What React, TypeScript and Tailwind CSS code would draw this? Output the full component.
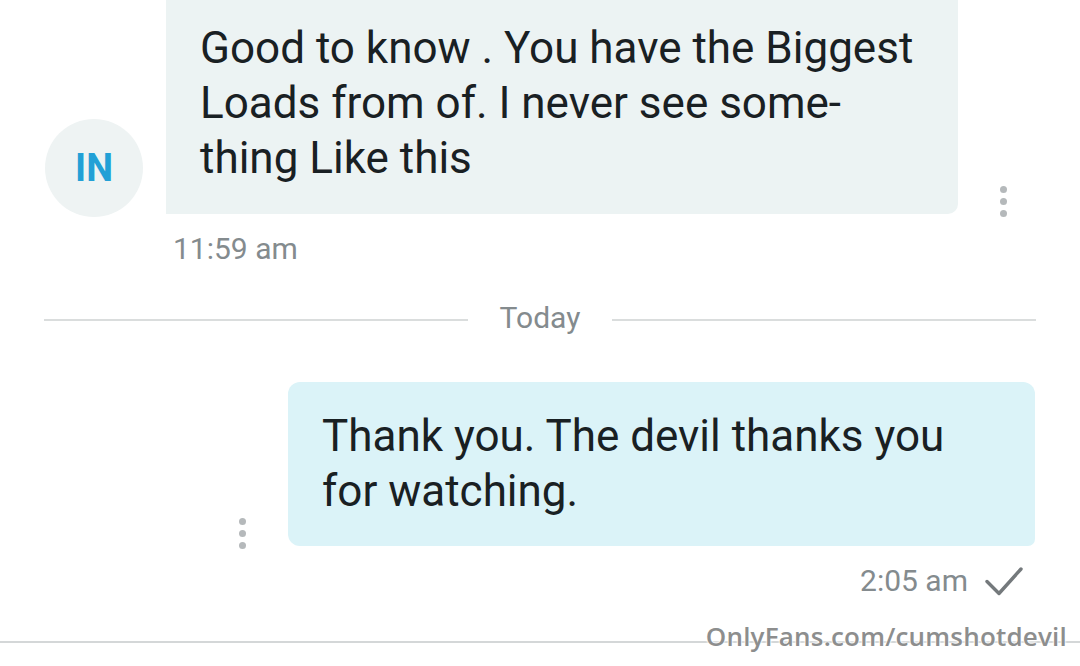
import React from "react";

function Dots() {
  return (
    <div className="flex flex-col gap-[5px]">
      <div className="w-[7px] h-[7px] rounded-full bg-[#b5b9bb]" />
      <div className="w-[7px] h-[7px] rounded-full bg-[#b5b9bb]" />
      <div className="w-[7px] h-[7px] rounded-full bg-[#b5b9bb]" />
    </div>
  );
}

export default function App() {
  return (
    <div
      className="w-[1080px] h-[666px] bg-white relative overflow-hidden text-[#192023]"
      style={{ fontFamily: "Roboto, 'Noto Sans', sans-serif" }}
    >
      {/* incoming message */}
      <div className="flex items-end pl-[45px]">
        <div className="w-[98px] h-[98px] rounded-full bg-[#eef3f3] flex items-center justify-center mb-[-3px]">
          <span className="text-[38px] font-bold text-[#22a0d6] leading-none">IN</span>
        </div>
        <div className="ml-[23px] w-[792px] bg-[#ecf3f3] rounded-br-[10px] pl-[34px] pt-[21px] pb-[28px] text-[44px] leading-[55px]">
          Good to know . You have the Biggest
          <br />
          Loads from of. I never see some-
          <br />
          thing Like this
        </div>
        <div className="ml-[42px] mb-[-3px]">
          <Dots />
        </div>
      </div>

      {/* time */}
      <div className="ml-[173px] mt-[17px] text-[30px] leading-[36px] text-[#848b8e]">11:59 am</div>

      {/* day divider */}
      <div className="mx-[44px] mt-[33px] flex items-center">
        <div className="flex-1 h-[2px] bg-[#dadddd] mt-[3px]" />
        <div className="px-[32px] text-[30px] leading-[36px] text-[#848b8e]">Today</div>
        <div className="flex-1 h-[2px] bg-[#dadddd] mt-[3px]" />
      </div>

      {/* outgoing message */}
      <div className="flex items-end justify-end pr-[45px] mt-[46px]">
        <div className="mr-[42px] mb-[-3px]">
          <Dots />
        </div>
        <div className="w-[747px] bg-[#dbf3f8] rounded-[12px] rounded-br-[7px] pl-[34px] pt-[27px] pb-[27px] text-[44px] leading-[55px]">
          Thank you. The devil thanks you
          <br />
          for watching.
        </div>
      </div>

      {/* time + check */}
      <div className="flex items-center justify-end pr-[57px] mt-[17px]">
        <span className="text-[30px] leading-[36px] text-[#848b8e]">2:05 am</span>
        <svg className="ml-[17px]" width="38" height="29" viewBox="0 0 38 29" fill="none">
          <path d="M2 14.5 L14 26.5 L36 2" stroke="#74797c" strokeWidth="3.4" strokeLinecap="round" strokeLinejoin="round" />
        </svg>
      </div>

      {/* bottom rule */}
      <div className="absolute left-0 right-0 top-[641px] h-[2px] bg-[#d4d7d8]" />

      {/* watermark */}
      <div
        className="absolute right-[13px] top-[619px] text-[26px] tracking-[0.2px] font-semibold text-[#8d8e8e] leading-[34px]"
        style={{
          fontFamily: "'Open Sans', sans-serif",
          textShadow: "0 0 2px #fff, 0 0 2px #fff, 0 0 3px #fff",
        }}
      >
        OnlyFans.com/cumshotdevil
      </div>
    </div>
  );
}
